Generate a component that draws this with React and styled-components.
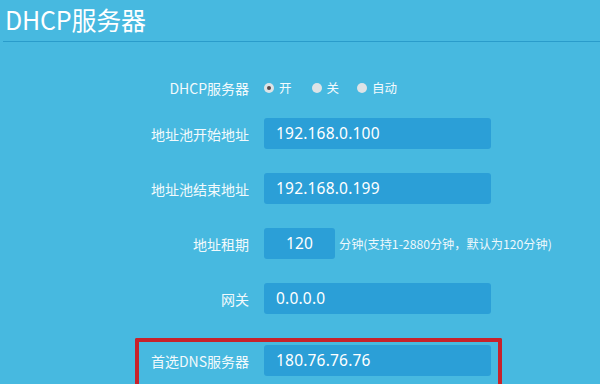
import React from "react";
import styled, { createGlobalStyle } from "styled-components";

const Global = createGlobalStyle`
  html, body { margin: 0; padding: 0; background: #47b9e0; }
  body { font-family: "Noto Sans CJK SC", "Noto Sans", sans-serif; color: #fff; overflow: hidden; }
`;

const Page = styled.div`
  width: 600px;
  height: 384px;
  background: #47b9e0;
  overflow: hidden;
`;

const Header = styled.div`
  margin-left: 3px;
  height: 42px;
  border-bottom: 1px solid #2a9ccb;
  box-sizing: border-box;
`;

const Title = styled.h1`
  margin: 0;
  padding-left: 2px;
  font-size: 25px;
  font-weight: 400;
  line-height: 38px;
  color: #fff;
  letter-spacing: -0.2px;
`;

const Form = styled.div`
  display: flex;
  flex-direction: column;
  padding-top: 30px;
`;

const Row = styled.div`
  display: grid;
  grid-template-columns: ${(p) => p.$labelWidth}px auto 1fr;
  column-gap: 15px;
  align-items: center;
  height: 31px;
  margin-top: ${(p) => p.$gap}px;
`;

const Label = styled.div`
  text-align: right;
  font-size: 14px;
  color: #f2f9fc;
  white-space: nowrap;
`;

const Input = styled.div`
  width: ${(p) => p.$w}px;
  height: 31px;
  box-sizing: border-box;
  background: #2b9fd7;
  border-radius: 3px;
  font-family: "Noto Sans", sans-serif;
  font-size: 15.5px;
  letter-spacing: 0.2px;
  line-height: 31px;
  padding-left: ${(p) => (p.$center ? 0 : 12)}px;
  text-align: ${(p) => (p.$center ? "center" : "left")};
  color: #fff;
`;

const Hint = styled.span`
  font-size: 12.2px;
  color: #eef8fc;
  margin-left: -11px;
  white-space: nowrap;
`;

const Radios = styled.div`
  display: flex;
  align-items: center;
`;

const RadioItem = styled.label`
  display: flex;
  align-items: center;
  font-size: 12.5px;
  color: #f4fafd;
  margin-right: ${(p) => p.$mr}px;
`;

const Dot = styled.span`
  width: 10px;
  height: 10px;
  border-radius: 50%;
  background: #dde3e6;
  margin-right: 5px;
  display: flex;
  align-items: center;
  justify-content: center;
  &::after {
    content: "";
    width: 4px;
    height: 4px;
    border-radius: 50%;
    background: ${(p) => (p.$on ? "#5a4a4a" : "transparent")};
  }
`;

const Highlight = styled.div`
  margin: 24px 98px 0 135px;
  border: 4px solid #c7222b;
  border-bottom: none;
  border-radius: 2px 2px 0 0;
  padding-top: 3px;
  height: 60px;
`;

export default function App() {
  return (
    <Page>
      <Global />
      <Header>
        <Title>DHCP服务器</Title>
      </Header>
      <Form>
        <Row $labelWidth={249} $gap={0}>
          <Label>DHCP服务器</Label>
          <Radios>
            <RadioItem $mr={20}>
              <Dot $on />开
            </RadioItem>
            <RadioItem $mr={18}>
              <Dot />关
            </RadioItem>
            <RadioItem $mr={0}>
              <Dot />自动
            </RadioItem>
          </Radios>
        </Row>
        <Row $labelWidth={249} $gap={15}>
          <Label>地址池开始地址</Label>
          <Input $w={227}>192.168.0.100</Input>
        </Row>
        <Row $labelWidth={249} $gap={24}>
          <Label>地址池结束地址</Label>
          <Input $w={227}>192.168.0.199</Input>
        </Row>
        <Row $labelWidth={249} $gap={24}>
          <Label>地址租期</Label>
          <Input $w={71} $center>120</Input>
          <Hint>分钟(支持1-2880分钟，默认为120分钟)</Hint>
        </Row>
        <Row $labelWidth={249} $gap={24}>
          <Label>网关</Label>
          <Input $w={227}>0.0.0.0</Input>
        </Row>
        <Highlight>
          <Row $labelWidth={110} $gap={0}>
            <Label>首选DNS服务器</Label>
            <Input $w={227}>180.76.76.76</Input>
          </Row>
        </Highlight>
      </Form>
    </Page>
  );
}
